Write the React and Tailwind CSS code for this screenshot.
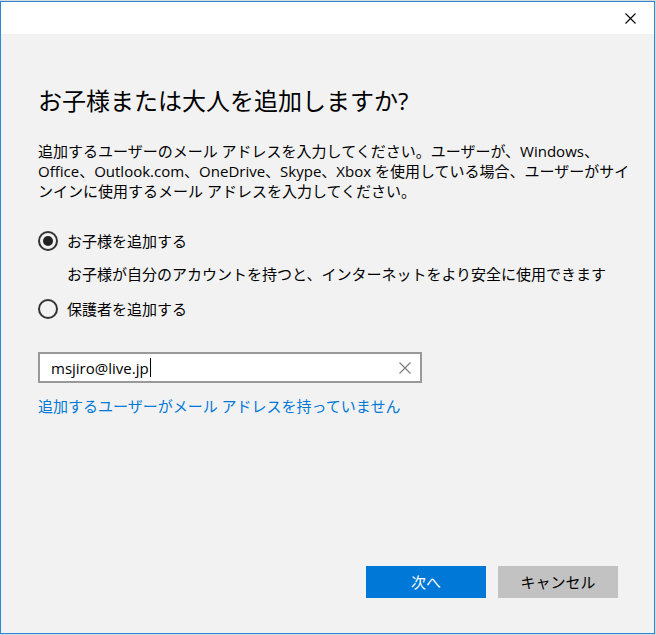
import React, { useState } from "react";

const font = { fontFamily: '"Open Sans", "Noto Sans CJK JP", sans-serif' };

function Radio({ checked, label, onClick }) {
  return (
    <div
      className="flex h-[20px] items-center gap-[9px] cursor-pointer"
      onClick={onClick}
    >
      <span className="flex h-[20px] w-[20px] items-center justify-center rounded-full border-2 border-[#333333]">
        {checked && <span className="h-[10px] w-[10px] rounded-full bg-[#222222]" />}
      </span>
      <span className="text-[15px] leading-[20px] text-black">{label}</span>
    </div>
  );
}

export default function App() {
  const [who, setWho] = useState("child");
  const [email, setEmail] = useState("msjiro@live.jp");

  return (
    <div className="h-[635px] w-[656px] bg-[#d9d9d9] pt-px" style={font}>
      <div className="flex h-[633px] w-[655px] flex-col border border-[#2b88d8] bg-[#f2f2f2]">
        {/* title bar */}
        <div className="flex h-[32px] shrink-0 items-center justify-end bg-white pr-[18px]">
          <svg width="11" height="11" viewBox="0 0 11 11" className="text-black">
            <path d="M0.5 0.5 L10.5 10.5 M10.5 0.5 L0.5 10.5" stroke="currentColor" strokeWidth="1.1" fill="none" />
          </svg>
        </div>

        <div className="flex flex-1 flex-col pl-[37px] pr-[36px] pb-[35px]">
          <h1 className="mt-[51px] text-[24px] font-normal leading-[32px] text-black">
            お子様または大人を追加しますか?
          </h1>

          <p className="mt-[24px] whitespace-nowrap text-[15px] leading-[20px] text-black">
            追加するユーザーのメール アドレスを入力してください。ユーザーが、Windows、
            <br />
            Office、Outlook.com、OneDrive、Skype、Xbox を使用している場合、ユーザーがサイ
            <br />
            ンインに使用するメール アドレスを入力してください。
          </p>

          <div className="mt-[30px]">
            <Radio
              checked={who === "child"}
              label="お子様を追加する"
              onClick={() => setWho("child")}
            />
          </div>
          <p className="mt-[13px] pl-[29px] text-[15px] leading-[20px] text-black">
            お子様が自分のアカウントを持つと、インターネットをより安全に使用できます
          </p>
          <div className="mt-[15px]">
            <Radio
              checked={who === "adult"}
              label="保護者を追加する"
              onClick={() => setWho("adult")}
            />
          </div>

          {/* email box with caret and clear button */}
          <div className="mt-[33px] flex h-[31px] w-[384px] items-center border-2 border-[#999999] bg-white pl-[11px] pr-[9px]">
            <div className="flex flex-1 items-center">
              <span className="text-[15px] leading-[20px] text-black">{email}</span>
              <span className="ml-px h-[19px] w-px bg-black" />
            </div>
            <svg
              width="12"
              height="12"
              viewBox="0 0 12 12"
              className="cursor-pointer text-[#7a7a7a]"
              onClick={() => setEmail("")}
            >
              <path d="M0.5 0.5 L11.5 11.5 M11.5 0.5 L0.5 11.5" stroke="currentColor" strokeWidth="1.1" fill="none" />
            </svg>
          </div>

          <a href="#" className="mt-[13px] self-start text-[15px] leading-[20px] text-[#0078d7]">
            追加するユーザーがメール アドレスを持っていません
          </a>

          <div className="mt-auto flex justify-end gap-[12px]">
            <button className="h-[32px] w-[120px] bg-[#0078d7] text-[15px] text-white" style={font}>
              次へ
            </button>
            <button className="h-[32px] w-[120px] bg-[#c2c2c2] text-[15px] text-black" style={font}>
              キャンセル
            </button>
          </div>
        </div>
      </div>
    </div>
  );
}
